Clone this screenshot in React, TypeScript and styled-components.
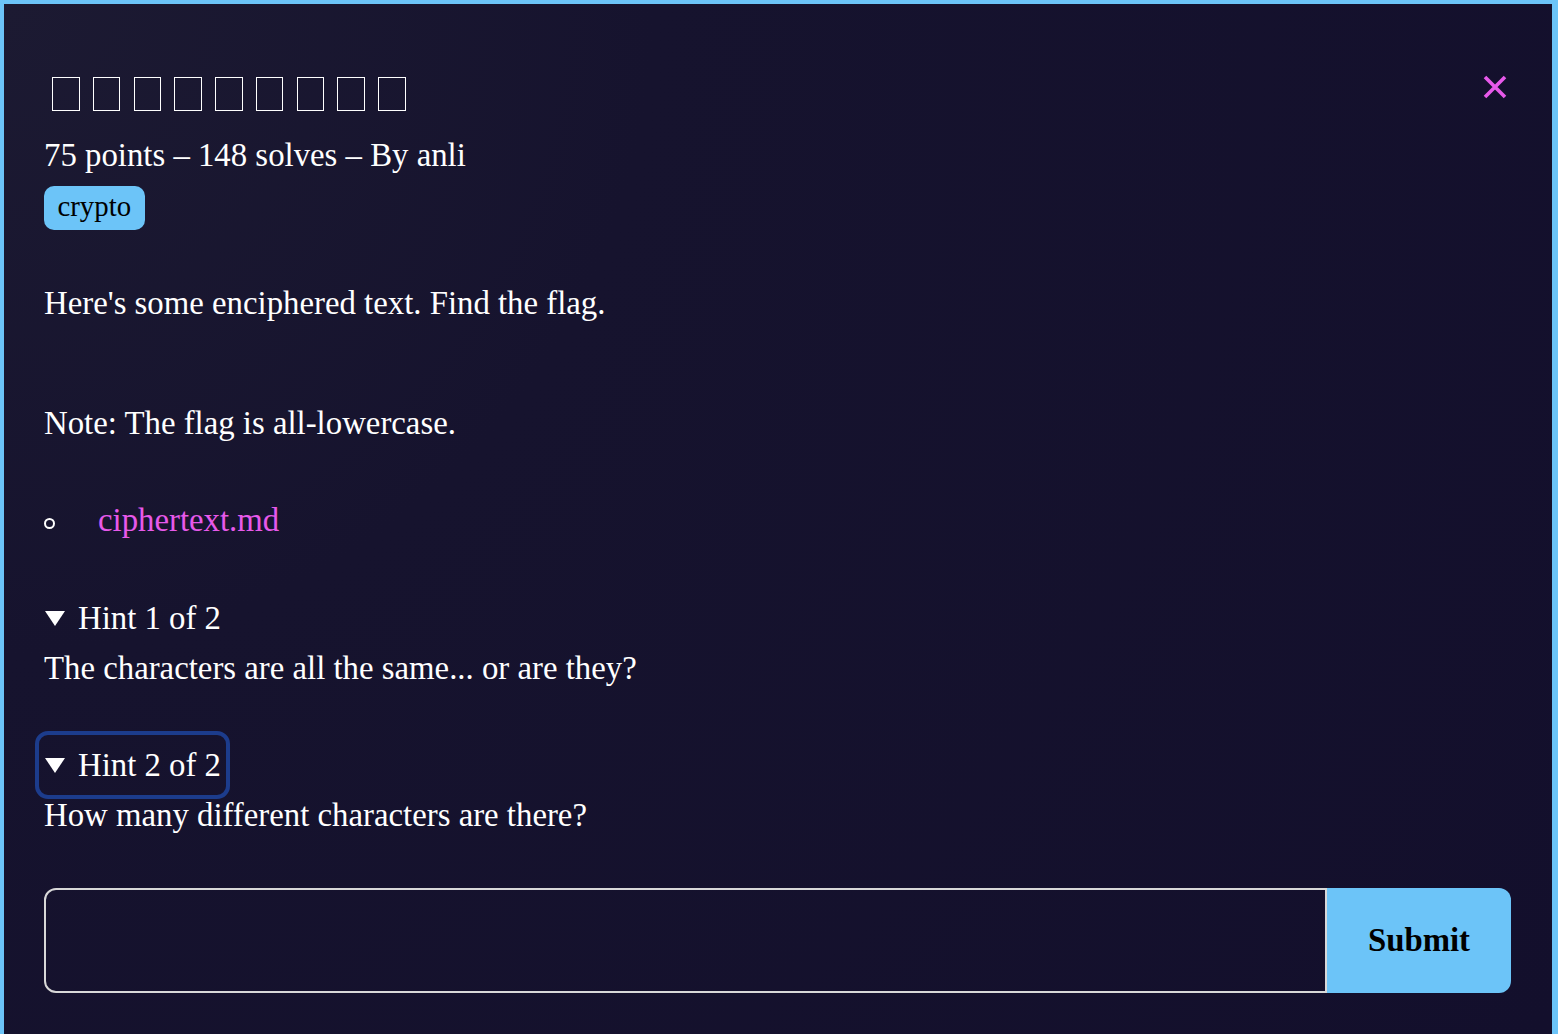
import styled, { createGlobalStyle } from "styled-components";

const GlobalStyle = createGlobalStyle`
  html, body {
    margin: 0;
    height: 100%;
    overflow: hidden;
    background: #6cc4f8;
  }
  body {
    font-family: "Liberation Serif", "Times New Roman", serif;
    color: #ffffff;
  }
`;

type Hint = {
  label: string;
  text: string;
  focused?: boolean;
};

const hints: Hint[] = [
  { label: "Hint 1 of 2", text: "The characters are all the same... or are they?" },
  { label: "Hint 2 of 2", text: "How many different characters are there?", focused: true },
];

const TITLE_GLYPHS = 9;

export default function App() {
  return (
    <>
      <GlobalStyle />
      <Modal>
        <Header>
          <Title aria-label="challenge title">
            {Array.from({ length: TITLE_GLYPHS }).map((_, i) => (
              <Tofu key={i} />
            ))}
          </Title>
          <CloseButton aria-label="Close">
            <svg width="24" height="24" viewBox="0 0 24 24">
              <path d="M2 2 L22 22 M22 2 L2 22" stroke="#e759ea" strokeWidth="3.6" />
            </svg>
          </CloseButton>
        </Header>
        <Meta>75 points – 148 solves – By anli</Meta>
        <Tags>
          <Tag>crypto</Tag>
        </Tags>
        <Description>
          <Paragraph>Here's some enciphered text. Find the flag.</Paragraph>
          <Paragraph>Note: The flag is all-lowercase.</Paragraph>
        </Description>
        <FileList>
          <FileItem>
            <FileLink href="#">ciphertext.md</FileLink>
          </FileItem>
        </FileList>
        <Hints>
          {hints.map((hint) => (
            <HintDetails key={hint.label} open>
              <HintSummary focused={!!hint.focused}>
                <svg width="20" height="15" viewBox="0 0 20 15">
                  <path d="M0 0 H20 L10 15 Z" fill="#ffffff" />
                </svg>
                {hint.label}
              </HintSummary>
              <HintText>{hint.text}</HintText>
            </HintDetails>
          ))}
        </Hints>
        <FlagForm onSubmit={(e) => e.preventDefault()}>
          <FlagInput aria-label="flag" />
          <SubmitButton type="submit">Submit</SubmitButton>
        </FlagForm>
      </Modal>
    </>
  );
}

const Modal = styled.div`
  box-sizing: border-box;
  height: calc(100vh - 4px);
  margin: 4px 6px 0 4px;
  padding: 71px 41px 0 40px;
  background: radial-gradient(
    circle at 0 0,
    #1c1a32 0%,
    #16132e 35%,
    #130f2c 100%
  );
  font-size: 32.8px;
`;

// Header
const Header = styled.div`
  display: flex;
  justify-content: space-between;
  align-items: flex-start;
`;
const Title = styled.h2`
  margin: 2px 0 0 8px;
  display: flex;
  gap: 13.25px;
`;
const Tofu = styled.span`
  box-sizing: border-box;
  width: 27.5px;
  height: 34px;
  border: 1.5px solid #ffffff;
`;
const CloseButton = styled.button`
  margin: 0 4px 0 0;
  padding: 0;
  width: 24px;
  height: 24px;
  border: none;
  background: none;
  cursor: pointer;
  svg {
    display: block;
  }
`;
const Meta = styled.div`
  margin-top: 24px;
  line-height: 40px;
`;
const Tags = styled.div`
  margin-top: 11px;
  display: flex;
`;
const Tag = styled.span`
  box-sizing: border-box;
  height: 44px;
  padding: 0 13.5px 3px;
  border-radius: 10px;
  background: #6cc4f8;
  color: #000000;
  font-size: 28.8px;
  line-height: 41px;
`;

// Description
const Description = styled.div`
  margin-top: 53px;
`;
const Paragraph = styled.p`
  margin: 0;
  line-height: 40px;
  & + & {
    margin-top: 80px;
  }
`;
const FileList = styled.ul`
  margin: 57px 0 0;
  padding: 0;
  list-style: none;
`;
const FileItem = styled.li`
  display: flex;
  align-items: center;
  gap: 43px;
  line-height: 40px;
  &::before {
    content: "";
    box-sizing: border-box;
    width: 11px;
    height: 11px;
    margin-top: 6px;
    border: 2px solid #ffffff;
    border-radius: 50%;
  }
`;
const FileLink = styled.a`
  color: #e759ea;
  text-decoration: none;
`;

// Hints
const Hints = styled.div`
  margin-top: 53px;
`;
const HintDetails = styled.details`
  & + & {
    margin-top: 47px;
  }
`;
const HintSummary = styled.summary<{ focused: boolean }>`
  display: flex;
  align-items: center;
  gap: 13px;
  width: fit-content;
  line-height: 50px;
  list-style: none;
  cursor: pointer;
  border-radius: 4px;
  outline: ${({ focused }) => (focused ? "4px solid #1c3c8c" : "none")};
  outline-offset: 5px;
  &::-webkit-details-marker {
    display: none;
  }
  svg {
    display: block;
    margin: 1px 0 0 1px;
  }
`;
const HintText = styled.p`
  margin: 0;
  line-height: 50px;
`;

// Flag form
const FlagForm = styled.form`
  margin-top: 48px;
  display: flex;
  height: 105px;
`;
const FlagInput = styled.input`
  flex: 1;
  min-width: 0;
  box-sizing: border-box;
  border: 2px solid #d8d8d8;
  border-radius: 12px 0 0 12px;
  background: transparent;
  color: #ffffff;
  font: inherit;
  padding: 0 20px;
  outline: none;
`;
const SubmitButton = styled.button`
  width: 184px;
  border: none;
  border-radius: 0 12px 12px 0;
  background: #6cc4f8;
  color: #000000;
  font-family: inherit;
  font-size: 32.8px;
  font-weight: 700;
  cursor: pointer;
`;
